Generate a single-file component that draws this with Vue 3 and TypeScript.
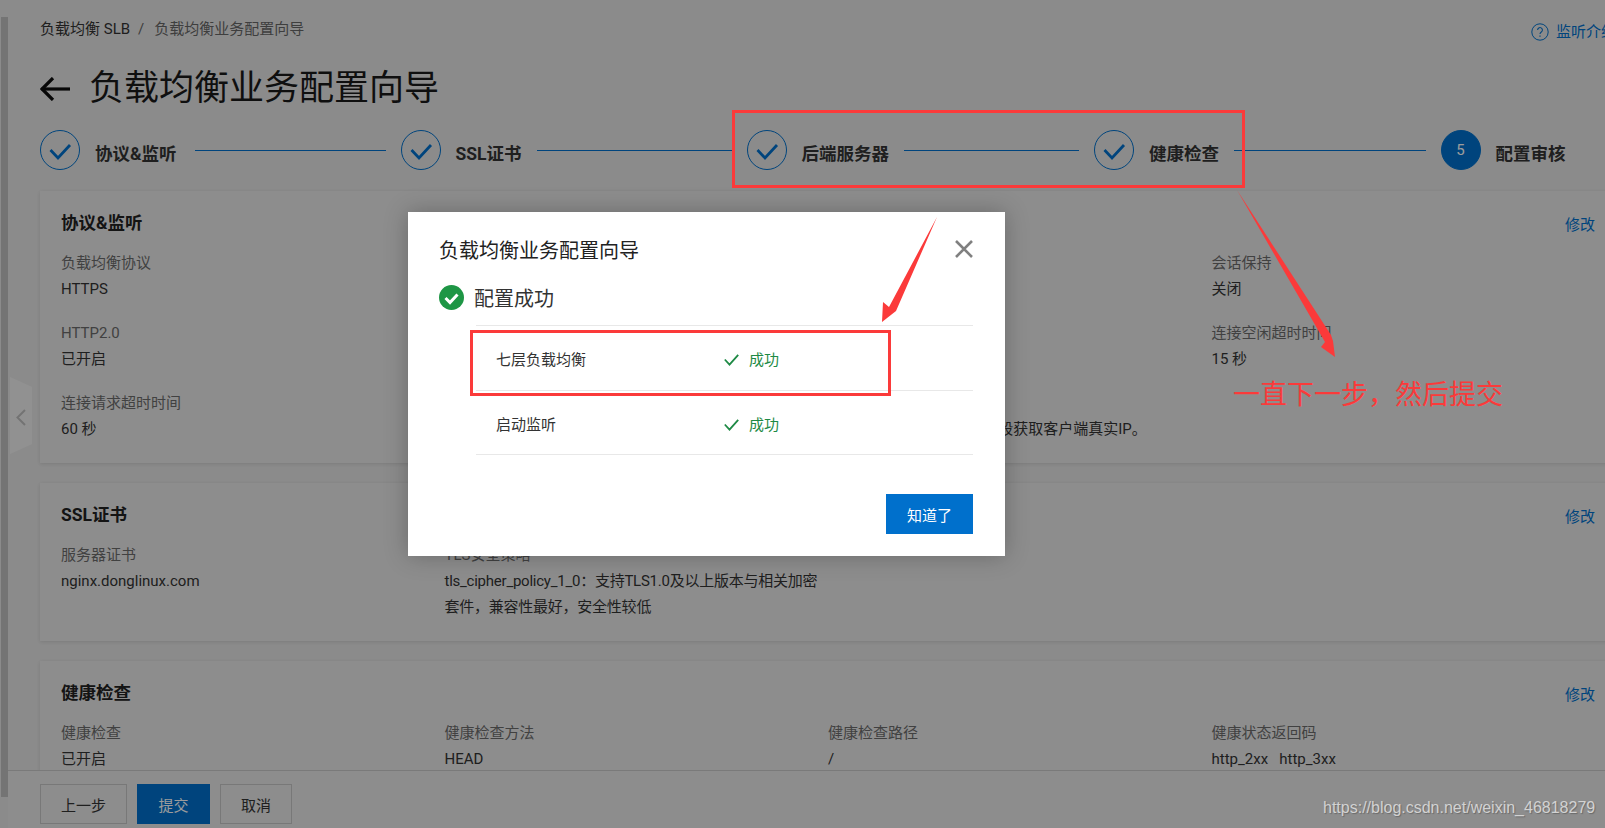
<script setup lang="ts">
interface Step { label: string; done: boolean; no: number; lineClass: string }
interface Field { label: string; lines: string[]; cls?: string }
interface Section { title: string; fields: Field[]; cls: string }

const steps: Step[] = [
  { label: '协议&监听', done: true, no: 1, lineClass: 'l1' },
  { label: 'SSL证书', done: true, no: 2, lineClass: 'l2' },
  { label: '后端服务器', done: true, no: 3, lineClass: 'l3' },
  { label: '健康检查', done: true, no: 4, lineClass: 'l4' },
  { label: '配置审核', done: false, no: 5, lineClass: '' },
]

const sections: Section[] = [
  {
    title: '协议&监听',
    cls: 'first',
    fields: [
      { label: '负载均衡协议', lines: ['HTTPS'] },
      { label: '监听端口', lines: ['443'] },
      { label: '调度算法', lines: ['轮询'] },
      { label: '会话保持', lines: ['关闭'] },
      { label: 'HTTP2.0', lines: ['已开启'] },
      { label: '访问控制', lines: ['关闭'] },
      { label: '带宽峰值', lines: ['不限制'] },
      { label: '连接空闲超时时间', lines: ['15 秒'] },
      { label: '连接请求超时时间', lines: ['60 秒'] },
      { label: 'Gzip压缩', lines: ['已开启'] },
      { label: '附加HTTP头字段', lines: ['通过X-Forwarded-For头字段获取客户端真实IP。'], cls: 'nowrap' },
    ],
  },
  {
    title: 'SSL证书',
    cls: 'second',
    fields: [
      { label: '服务器证书', lines: ['nginx.donglinux.com'] },
      { label: 'TLS安全策略', lines: ['tls_cipher_policy_1_0：支持TLS1.0及以上版本与相关加密', '套件，兼容性最好，安全性较低'], cls: 'nowrap tight' },
    ],
  },
  {
    title: '健康检查',
    cls: 'third',
    fields: [
      { label: '健康检查', lines: ['已开启'] },
      { label: '健康检查方法', lines: ['HEAD'] },
      { label: '健康检查路径', lines: ['/'] },
      { label: '健康状态返回码', lines: ['http_2xx\u00a0\u00a0\u00a0http_3xx'] },
    ],
  },
]

const results: string[] = ['七层负载均衡', '启动监听']
</script>

<template>
  <div class="page">
    <div class="scrollbar"><span class="thumb"></span></div>
    <div class="content">
      <div class="body">
        <div class="inner">
          <header class="crumbs">
            <div class="crumb-path">
              <span class="crumb-root">负载均衡 SLB</span>
              <span class="crumb-sep">/</span>
              <span class="crumb-cur">负载均衡业务配置向导</span>
            </div>
            <a class="help">
              <svg width="18" height="18" viewBox="0 0 18 18" fill="none" stroke="currentColor">
                <circle cx="9" cy="9" r="8.2" stroke-width="1" />
                <path d="M6.6 7a2.4 2.4 0 1 1 3.7 2c-.9.6-1.3 1-1.3 2" stroke-width="1.1" />
                <path d="M9 12.6v1.2" stroke-width="1.2" />
              </svg>
              <span>监听介绍</span>
            </a>
          </header>

          <div class="title-row">
            <svg class="back" width="30" height="24" viewBox="0 0 30 24" fill="none" stroke="#0c0c0c" stroke-width="3.2">
              <path d="M1.5 12H30" />
              <path d="M13 1 2 12l11 11" />
            </svg>
            <h1>负载均衡业务配置向导</h1>
          </div>

          <div class="steps">
            <template v-for="s in steps" :key="s.no">
              <span class="circle" :class="{ active: !s.done }">
                <svg v-if="s.done" width="38" height="38" viewBox="0 0 38 38" fill="none" stroke="#0070cc" stroke-width="2.8">
                  <path d="M9.5 19l7.5 8L29 14" />
                </svg>
                <template v-else>{{ s.no }}</template>
              </span>
              <span class="step-label">{{ s.label }}</span>
              <span v-if="s.lineClass" class="line" :class="s.lineClass"></span>
            </template>
          </div>

          <section v-for="sec in sections" :key="sec.title" class="card" :class="sec.cls">
            <div class="card-head">
              <h2>{{ sec.title }}</h2>
              <a class="edit">修改</a>
            </div>
            <div class="grid">
              <div v-for="f in sec.fields" :key="f.label" class="field" :class="f.cls">
                <div class="f-label">{{ f.label }}</div>
                <div v-for="l in f.lines" :key="l" class="f-value">{{ l }}</div>
              </div>
            </div>
          </section>
        </div>
      </div>
      <footer class="footer">
        <button class="btn prev">上一步</button>
        <button class="btn primary">提交</button>
        <button class="btn cancel">取消</button>
      </footer>
    </div>

    <div class="side-tab">
      <svg width="22" height="77" viewBox="0 0 22 77">
        <path d="M0 0 22 10v57L0 77Z" fill="#eee" />
        <path d="M15 33 7.5 40.5 15 48" fill="none" stroke="#bdbdbd" stroke-width="2" />
      </svg>
    </div>

    <div class="mask"></div>

    <div class="dialog">
      <div class="dlg-head">
        <div class="dlg-title">负载均衡业务配置向导</div>
        <svg class="close" width="18" height="18" viewBox="0 0 18 18" stroke="#808080" stroke-width="2.6">
          <path d="M1 1l16 16M17 1 1 17" />
        </svg>
      </div>
      <div class="dlg-status">
        <svg width="25" height="25" viewBox="0 0 25 25">
          <circle cx="12.5" cy="12.5" r="12.5" fill="#1e9645" />
          <path d="M6.5 13l4.5 4.5 7.5-8" fill="none" stroke="#fff" stroke-width="3" />
        </svg>
        <span>配置成功</span>
      </div>
      <div class="dlg-list">
        <div v-for="r in results" :key="r" class="dlg-row">
          <span class="r-name">{{ r }}</span>
          <span class="r-state">
            <svg width="15" height="12" viewBox="0 0 15 12" fill="none" stroke="#1e8a45" stroke-width="1.8">
              <path d="M.8 5.5 5.5 10.6 14.2.8" />
            </svg>
            成功
          </span>
        </div>
      </div>
      <div class="dlg-foot"><button class="ok">知道了</button></div>
    </div>

    <div class="anno box-a"></div>
    <div class="anno box-b"></div>
    <svg class="anno arrows" width="1605" height="828" viewBox="0 0 1605 828">
      <path d="M937 217 896 311 882 322 883 302 889 307Z" fill="#fb3a3a" />
      <path d="M1237 190 1331 335 1333 341 1335 357 1321 347 1325 342Z" fill="#fb3a3a" />
    </svg>
    <div class="anno note">一直下一步，然后提交</div>
    <div class="anno mark">https://blog.csdn.net/weixin_46818279</div>
  </div>
</template>

<style scoped>
.page {
  position: relative;
  width: 1605px;
  height: 828px;
  display: flex;
  overflow: hidden;
  background: #e4e4e4;
  font-family: Roboto, "Noto Sans CJK SC", sans-serif;
  font-size: 15px;
  color: #333;
}
.scrollbar {
  width: 8px;
  flex: none;
  padding: 17px 0 0 1px;
  box-sizing: border-box;
  position: relative;
  z-index: 3;
}
.thumb {
  display: block;
  width: 7px;
  height: 780px;
  background: #747474;
}
.content {
  flex: 1;
  min-width: 0;
  display: flex;
  flex-direction: column;
}
.body {
  flex: 1;
  min-height: 0;
  overflow: hidden;
}
.inner {
  width: 1576px;
  margin-left: 32px;
  padding-top: 19px;
}
.crumbs {
  display: flex;
  justify-content: space-between;
  line-height: 20px;
  height: 20px;
}
.crumb-path {
  display: flex;
}
.crumb-root {
  color: #333;
}
.crumb-sep {
  color: #666;
  margin: 0 10px 0 8px;
}
.crumb-cur {
  color: #666;
}
.help {
  display: flex;
  align-items: center;
  gap: 7px;
  color: #0070cc;
  margin-top: 3px;
  height: 20px;
}
.title-row {
  display: flex;
  align-items: center;
  gap: 19px;
  margin-top: 26px;
  height: 48px;
}
.back {
  flex: none;
}
h1 {
  margin: 0;
  font-size: 35px;
  font-weight: 400;
  color: #1a1a1a;
  line-height: 48px;
}
.steps {
  display: flex;
  align-items: center;
  height: 40px;
  margin-top: 17px;
}
.circle {
  width: 40px;
  height: 40px;
  flex: none;
  box-sizing: border-box;
  border: 1px solid #0070cc;
  border-radius: 50%;
  display: flex;
  align-items: center;
  justify-content: center;
  font-size: 15px;
  color: #fff;
}
.circle.active {
  background: #0070cc;
}
.step-label {
  margin-left: 15px;
  font-size: 17.5px;
  font-weight: 700;
  color: #333;
  white-space: nowrap;
  line-height: 24px;
  padding-top: 8px;
}
.line {
  height: 1px;
  background: #0070cc;
  margin: 0 15px;
  flex: none;
}
.l1 { width: 191px; margin-left: 18px; }
.l2 { width: 195px; }
.l3 { width: 175px; }
.l4 { width: 191.5px; }
.card {
  background: #e7e7e7;
  box-shadow: 0 1px 4px rgba(0, 0, 0, .12);
  padding: 20px 21px 20px 21px;
  margin-bottom: 20px;
}
.steps + .card {
  margin-top: 21px;
}
.card.first { height: 272px; box-sizing: border-box; }
.card.second { height: 158px; box-sizing: border-box; }
.card-head {
  display: flex;
  justify-content: space-between;
  align-items: center;
  height: 24px;
  margin-bottom: 15px;
}
h2 {
  margin: 0;
  font-size: 17.5px;
  font-weight: 700;
  color: #222;
  line-height: 24px;
}
.edit {
  color: #0070cc;
}
.grid {
  display: grid;
  grid-template-columns: repeat(4, 383.5px);
  row-gap: 18px;
}
.field {
  line-height: 26px;
}
.nowrap {
  white-space: nowrap;
}
.tight .f-value {
  letter-spacing: -.24px;
}
.f-label {
  color: #6b6b6b;
}
.f-value {
  color: #333;
}
.footer {
  height: 58px;
  flex: none;
  box-sizing: border-box;
  border-top: 1px solid #c8c8c8;
  background: #e6e6e6;
  padding: 13px 0 0 32px;
  display: flex;
  gap: 10px;
  position: relative;
}
.btn {
  height: 40px;
  box-sizing: border-box;
  font: inherit;
  border: 1px solid #c4c4c4;
  background: #e6e6e6;
  color: #333;
  padding: 0;
}
.prev { width: 87px; }
.cancel { width: 72px; }
.primary {
  width: 73px;
  background: #0070cc;
  border-color: #0070cc;
  color: #fff;
}
.side-tab {
  position: absolute;
  left: 10px;
  top: 377px;
  width: 22px;
  height: 77px;
}
.mask {
  position: absolute;
  inset: 0;
  background: rgba(0, 0, 0, .39);
}
.dialog {
  position: absolute;
  left: 408px;
  top: 212px;
  width: 597px;
  height: 344px;
  box-sizing: border-box;
  padding: 25px 32px 22px 31px;
  background: #fff;
  box-shadow: 0 0 22px rgba(0, 0, 0, .25);
  display: flex;
  flex-direction: column;
}
.dlg-head {
  display: flex;
  justify-content: space-between;
  align-items: center;
  height: 28px;
}
.dlg-title {
  font-size: 20px;
  color: #222;
  line-height: 28px;
}
.close {
  margin-bottom: 5px;
}
.dlg-status {
  display: flex;
  align-items: center;
  gap: 10px;
  margin-top: 19px;
  font-size: 20px;
  color: #333;
  height: 26px;
}
.dlg-list {
  margin: 15px 0 0 37px;
  border-top: 1px solid #e8e8e8;
}
.dlg-row {
  height: 64.5px;
  box-sizing: border-box;
  padding: 21px 0 0 20px;
  border-bottom: 1px solid #e8e8e8;
  display: flex;
  line-height: 26px;
  color: #333;
}
.r-name {
  width: 228px;
}
.r-state {
  display: flex;
  align-items: center;
  gap: 10px;
  height: 26px;
  color: #1e8a45;
}
.dlg-foot {
  margin-top: auto;
  display: flex;
  justify-content: flex-end;
}
.ok {
  width: 87px;
  height: 40px;
  border: 0;
  padding: 0;
  font: inherit;
  background: #0070cc;
  color: #fff;
}
.anno {
  position: absolute;
}
.box-a {
  left: 470px;
  top: 330px;
  width: 421px;
  height: 66px;
  box-sizing: border-box;
  border: 3px solid #fb3a3a;
}
.box-b {
  left: 732px;
  top: 110px;
  width: 513px;
  height: 78px;
  box-sizing: border-box;
  border: 3px solid #fb3a3a;
}
.arrows {
  left: 0;
  top: 0;
  pointer-events: none;
}
.note {
  left: 1233px;
  top: 377px;
  font-size: 27px;
  line-height: 36px;
  color: #fb3a3a;
  white-space: nowrap;
}
.mark {
  left: 1323px;
  top: 798px;
  font-family: "Liberation Sans", sans-serif;
  font-size: 16px;
  line-height: 20px;
  color: #d2d2d2;
  text-shadow: 1px 1px 1px rgba(0, 0, 0, .25);
  white-space: nowrap;
}
</style>
